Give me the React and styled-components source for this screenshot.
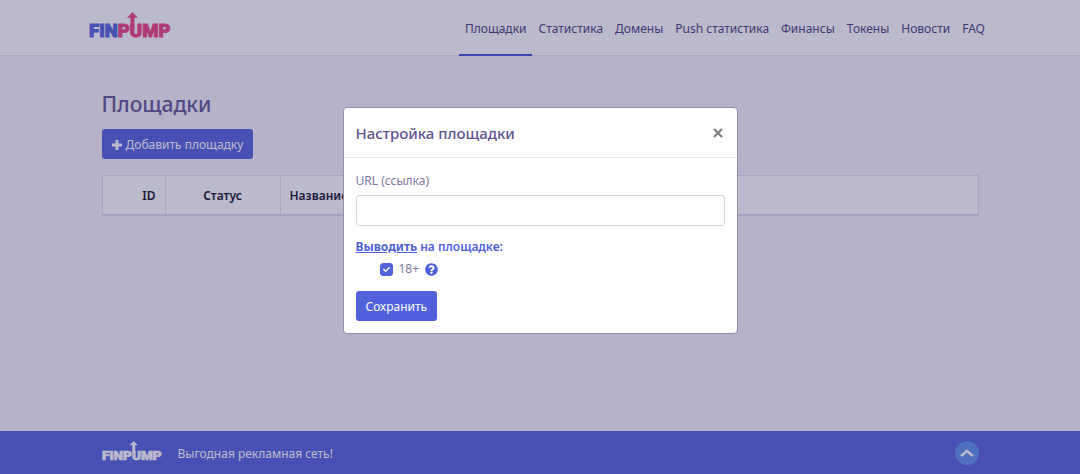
import React from 'react'
import styled, { createGlobalStyle } from 'styled-components'
import { FaQuestionCircle, FaCheck } from 'react-icons/fa'

const GlobalStyle = createGlobalStyle`
*, *::before, *::after {
  box-sizing: border-box;
}
body {
  margin: 0;
  background: #f7f5fb;
  color: #6c628f;
  font-family: "Noto Sans", "Open Sans", sans-serif;
  font-size: 12px;
  line-height: 18px;
}
button, input {
  font: inherit;
}
`

const Page = styled.div`
display: flex;
flex-direction: column;
min-height: 100vh;
`

const Container = styled.div`
width: 100%;
max-width: ${props => props.$wide ? '902px' : '877px'};
margin: 0 auto;
`

const Header = styled.header`
background: #fff;
border-bottom: 1px solid #e8e5f0;
`

const HeaderRow = styled(Container)`
display: flex;
align-items: center;
justify-content: space-between;
height: 55px;
`

const LogoLink = styled.a`
display: flex;
padding-bottom: 4px;
`

const Nav = styled.nav`
display: flex;
align-self: stretch;
margin-bottom: -1px;
`

const NavLink = styled.a`
display: flex;
align-items: center;
padding: 3px 6px 0;
border-bottom: 2px solid ${props => props.$active ? '#3f51dc' : 'transparent'};
color: #443b78;
text-decoration: none;
white-space: nowrap;
`

const Main = styled.main`
flex: 1;
padding-top: 34px;
`

const Title = styled.h1`
margin: 0 0 10px;
color: #5e5390;
font-size: 21px;
font-weight: 500;
line-height: 29px;
`

const Button = styled.button`
display: inline-flex;
align-items: center;
gap: 4px;
height: 30px;
padding: 2px 10px 0;
border: 0;
border-radius: 3px;
background: #4f62dc;
color: #fff;
cursor: pointer;
`

const Table = styled.table`
width: 100%;
margin-top: 16px;
border: 1px solid #e3e0ee;
border-bottom: 2px solid #dcd9e8;
border-collapse: collapse;
table-layout: fixed;
background: #fff;
`

const Th = styled.th`
width: ${props => props.$width || 'auto'};
height: 39px;
padding: 2px 9px 0;
border-right: 1px solid #e3e0ee;
color: #0d0b24;
font-weight: 600;
text-align: ${props => props.$align || 'left'};
`

const Footer = styled.footer`
border-top: 1px solid #f4f2f4;
background: #4f62dc;
color: #fff;
`

const FooterRow = styled(Container)`
display: flex;
align-items: center;
gap: 16px;
height: 43px;
`

const Slogan = styled.p`
margin: 0;
padding-top: 2px;
`

const ToTop = styled.a`
display: flex;
align-items: center;
justify-content: center;
width: 24px;
height: 24px;
margin-left: auto;
border-radius: 50%;
background: #5b90ea;
color: #fff;
`

const Backdrop = styled.div`
position: fixed;
inset: 0;
display: flex;
align-items: flex-start;
justify-content: center;
padding: 107px 16px 16px;
background: rgba(56, 50, 106, 0.34);
`

const Dialog = styled.section`
width: 100%;
max-width: 395px;
border: 1px solid #918da9;
border-radius: 4px;
background: #fff;
`

const DialogHeader = styled.div`
display: flex;
align-items: center;
justify-content: space-between;
height: 50px;
padding: 0 12px;
border-bottom: 1px solid #e9e9ee;
`

const DialogTitle = styled.h2`
margin: 0;
color: #5e5390;
font-size: 15px;
font-weight: 500;
line-height: 22px;
`

const Close = styled.button`
display: flex;
padding: 2px;
border: 0;
background: none;
color: #7c7c7c;
cursor: pointer;
`

const Form = styled.form`
padding: 14px 12px 12px;
`

const Label = styled.label`
display: block;
margin-bottom: 5px;
color: #8078a0;
`

const TextInput = styled.input`
display: block;
width: 100%;
height: 31px;
padding: 0 10px;
border: 1px solid #d4d8e0;
border-radius: 3px;
`

const Group = styled.fieldset`
margin: 0 0 13px;
padding: 12px 0 0;
border: 0;
`

const Legend = styled.legend`
float: left;
width: 100%;
margin-bottom: 4px;
padding: 0;
color: #4f62dc;
font-weight: 600;
`

const Underlined = styled.span`
font-weight: 700;
text-decoration: underline;
`

const CheckRow = styled.div`
clear: both;
display: flex;
align-items: center;
gap: 6px;
padding-left: 24px;
color: #8078a0;
`

const CheckBox = styled.span`
display: grid;
place-items: center;
width: 13px;
height: 13px;

> * {
  grid-area: 1 / 1;
}
svg {
  color: #fff;
  pointer-events: none;
  visibility: hidden;
}
input:checked + svg {
  visibility: visible;
}
`

const Check = styled.input`
appearance: none;
width: 13px;
height: 13px;
margin: 0;
border: 1px solid #4f62dc;
border-radius: 3px;

&:checked {
  background: #4f62dc;
}
`

const Help = styled.button`
display: flex;
padding: 0;
border: 0;
background: none;
color: #4f62dc;
font-size: 13px;
`

const LogoText = styled.text`
font-family: Roboto, sans-serif;
font-size: 19px;
font-weight: 900;
stroke-width: 1px;
`

const Logo = ({ width, first, second }) => (
  <svg width={width} viewBox="0 0 84 28" overflow="visible" role="img" aria-label="Finpump">
    <LogoText x="0" y="26">
      <tspan fill={first} stroke={first}>FIN</tspan>
      <tspan fill={second} stroke={second}>PUMP</tspan>
    </LogoText>
    <path d="M44.500 16V4" stroke={second} strokeWidth="4" />
    <path d="M39 6L44.500 0L50 6Z" fill={second} />
  </svg>
)

const links = ['Площадки', 'Статистика', 'Домены', 'Push статистика', 'Финансы', 'Токены', 'Новости', 'FAQ']

const SiteModal = () => (
  <Backdrop>
    <Dialog role="dialog" aria-labelledby="site-title">
      <DialogHeader>
        <DialogTitle id="site-title">Настройка площадки</DialogTitle>
        <Close type="button" aria-label="Закрыть">
          <svg width="10" height="10" viewBox="0 0 10 10" stroke="currentColor" strokeWidth="2">
            <path d="M1 1L9 9M9 1L1 9" />
          </svg>
        </Close>
      </DialogHeader>
      <Form onSubmit={e => e.preventDefault()}>
        <Label htmlFor="url">URL (ссылка)</Label>
        <TextInput id="url" type="text" />
        <Group>
          <Legend><Underlined>Выводить</Underlined> на площадке:</Legend>
          <CheckRow>
            <CheckBox>
              <Check id="adult" type="checkbox" defaultChecked />
              <FaCheck size={7} />
            </CheckBox>
            <label htmlFor="adult">18+</label>
            <Help type="button" aria-label="Подсказка"><FaQuestionCircle /></Help>
          </CheckRow>
        </Group>
        <Button type="submit">Сохранить</Button>
      </Form>
    </Dialog>
  </Backdrop>
)

const App = () => (
  <>
    <GlobalStyle />
    <Page>
      <Header>
        <HeaderRow $wide>
          <LogoLink href="#"><Logo width={82} first="#4f62dc" second="#ee3f7e" /></LogoLink>
          <Nav>
            {links.map((item, i) => <NavLink key={item} href="#" $active={i === 0}>{item}</NavLink>)}
          </Nav>
        </HeaderRow>
      </Header>
      <Main>
        <Container>
          <Title>Площадки</Title>
          <Button type="button">
            <svg width="10" height="10" viewBox="0 0 10 10" stroke="currentColor" strokeWidth="3">
              <path d="M5 0V10M0 5H10" />
            </svg>
            Добавить площадку
          </Button>
          <Table>
            <thead>
              <tr>
                <Th $width="63px" $align="right">ID</Th>
                <Th $width="115px" $align="center">Статус</Th>
                <Th>Название</Th>
              </tr>
            </thead>
          </Table>
        </Container>
      </Main>
      <Footer>
        <FooterRow>
          <LogoLink href="#"><Logo width={60} first="#fff" second="#fff" /></LogoLink>
          <Slogan>Выгодная рекламная сеть!</Slogan>
          <ToTop href="#" aria-label="Наверх">
            <svg width="14" height="8" viewBox="0 0 14 8" fill="none" stroke="currentColor" strokeWidth="2.500">
              <path d="M1 7L7 2L13 7" />
            </svg>
          </ToTop>
        </FooterRow>
      </Footer>
    </Page>
    <SiteModal />
  </>
)

export default App
